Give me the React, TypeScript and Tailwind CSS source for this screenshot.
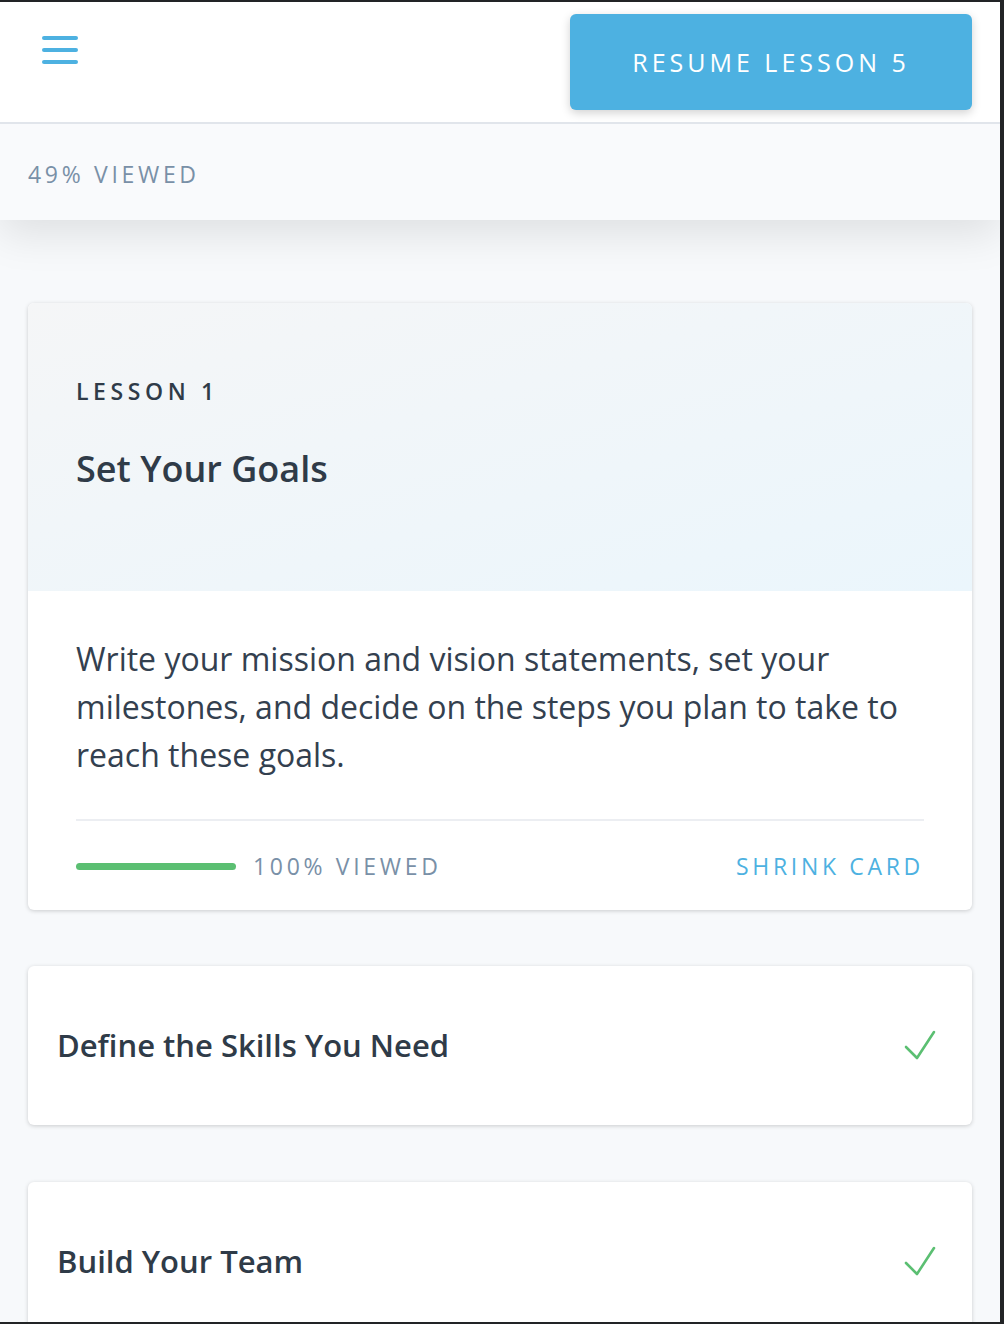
import React from "react";

function Check() {
  return (
    <svg width="36" height="36" viewBox="0 0 36 36" fill="none">
      <path d="M4 19 L15 30 L32 4" stroke="#5bbf72" strokeWidth="2.6" strokeLinecap="round" strokeLinejoin="round" />
    </svg>
  );
}

function CollapsedCard({ title, className = "" }: { title: string; className?: string }) {
  return (
    <div className={`bg-white rounded-md shadow-[0_1px_4px_rgba(0,0,0,0.18)] h-[159px] pl-[29px] pr-[34px] flex items-center justify-between shrink-0 ${className}`}>
      <div className="text-[31px] font-semibold text-[#2f3b48] leading-none">{title}</div>
      <Check />
    </div>
  );
}

export default function App() {
  return (
    <div className="w-[1004px] h-[1324px] bg-[#222426] pt-[2px] pr-[4px] pb-[2px] overflow-hidden" style={{ fontFamily: '"Open Sans", "Noto Sans", sans-serif' }}>
      <div className="w-[1000px] h-[1320px] bg-[#f7f9fb] overflow-hidden flex flex-col">
        <div className="relative z-10 shadow-[0_14px_40px_rgba(0,0,0,0.10)]">
          <div className="h-[122px] bg-white border-b-2 border-[#e1e5eb] flex items-start justify-between pl-[42px] pr-[28px]">
            <div className="flex flex-col gap-[8.5px] pt-[34px]">
              <div className="w-[36px] h-[3.5px] rounded-full bg-[#4db1e1]" />
              <div className="w-[36px] h-[3.5px] rounded-full bg-[#4db1e1]" />
              <div className="w-[36px] h-[3.5px] rounded-full bg-[#4db1e1]" />
            </div>
            <div className="mt-[12px] w-[402px] h-[96px] rounded-md bg-[#4db1e1] shadow-[0_3px_10px_rgba(0,0,0,0.18)] flex items-center justify-center pt-[2px] text-white text-[25px] font-medium tracking-[0.16em]">
              RESUME LESSON 5
            </div>
          </div>
          <div className="h-[96px] bg-[#f9fafc] flex items-center pl-[28px] pt-[4px] text-[23px] font-medium text-[#7990a7] tracking-[0.16em]">
            49% VIEWED
          </div>
        </div>
        <div className="flex flex-col gap-[56px] px-[28px] pt-[83px]">
          <div className="bg-white rounded-md shadow-[0_1px_4px_rgba(0,0,0,0.18)] overflow-hidden shrink-0">
            <div className="h-[288px] bg-gradient-to-br from-[#f5f6f7] to-[#ebf6fc] px-[48px] pt-[73px]">
              <div className="text-[23px] font-semibold tracking-[0.2em] text-[#2f3b48] leading-[30px]">LESSON 1</div>
              <div className="mt-[43px] text-[36px] font-semibold text-[#2f3b48] leading-[40px]">Set Your Goals</div>
            </div>
            <div className="px-[48px] pt-[44px]">
              <p className="text-[32px] leading-[48px] text-[#33404f]">
                Write your mission and vision statements, set your milestones, and decide on the steps you plan to take to reach these goals.
              </p>
              <div className="mt-[40px] border-t-2 border-[#eceef2] flex items-center h-[91px] pt-[2px]">
                <div className="w-[160px] h-[7px] rounded-full bg-[#5bbf72]" />
                <div className="ml-[17px] text-[23px] font-medium text-[#7990a7] tracking-[0.16em]">100% VIEWED</div>
                <div className="ml-auto text-[23px] font-medium text-[#4db1e1] tracking-[0.16em]">SHRINK CARD</div>
              </div>
            </div>
          </div>
          <CollapsedCard title="Define the Skills You Need" />
          <CollapsedCard title="Build Your Team" className="mt-[1px]" />
        </div>
      </div>
    </div>
  );
}
